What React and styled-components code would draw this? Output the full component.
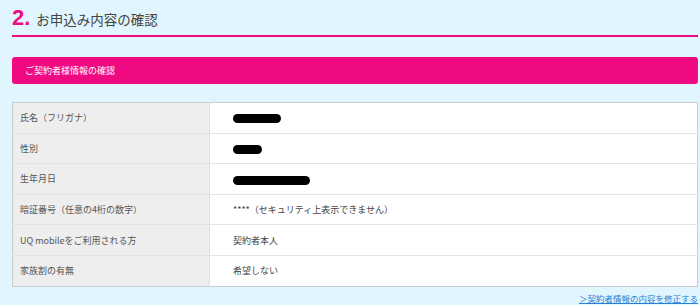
import styled, { createGlobalStyle } from "styled-components"

const GlobalStyle = createGlobalStyle`
  html, body {
    margin: 0;
    padding: 0;
    background: #e0f5fd;
    font-family: "Noto Sans CJK JP", "Liberation Sans", sans-serif;
  }
`

const rows = [
  { label: "氏名（フリガナ）", mask: 48 },
  { label: "性別", mask: 29 },
  { label: "生年月日", mask: 77 },
  { label: "暗証番号（任意の4桁の数字）", value: "****（セキュリティ上表示できません）" },
  { label: "UQ mobileをご利用される方", value: "契約者本人" },
  { label: "家族割の有無", value: "希望しない" },
]

export default function App() {
  return (
    <>
      <GlobalStyle />
      <Page>
        <Heading>
          <StepNo>2.</StepNo>
          <HeadingText>お申込み内容の確認</HeadingText>
        </Heading>

        <SectionBar>ご契約者様情報の確認</SectionBar>

        <Table>
          <colgroup>
            <col style={{ width: 197 }} />
            <col />
          </colgroup>
          <tbody>
            {rows.map((r) => (
              <Row key={r.label}>
                <Label>{r.label}</Label>
                <Value>
                  {r.mask ? <Mask style={{ width: r.mask }} /> : r.value}
                </Value>
              </Row>
            ))}
          </tbody>
        </Table>

        <LinkRow>
          <EditLink href="#">＞契約者情報の内容を修正する</EditLink>
        </LinkRow>
      </Page>
    </>
  )
}

const Page = styled.div`
  width: 700px;
  height: 305px;
  box-sizing: border-box;
  padding: 0 2px 0 12px;
  overflow: hidden;
`

const Heading = styled.div`
  display: flex;
  align-items: baseline;
  height: 37px;
  box-sizing: border-box;
  padding-top: 5px;
  border-bottom: 2px solid #ee0a80;
`

const StepNo = styled.span`
  font-family: "Liberation Sans", Arial, sans-serif;
  font-weight: bold;
  font-size: 22px;
  color: #ee0a80;
  margin-right: 6px;
`

const HeadingText = styled.span`
  font-size: 13.5px;
  color: #444;
`

const SectionBar = styled.div`
  margin-top: 20px;
  height: 27px;
  display: flex;
  align-items: center;
  padding-left: 13px;
  background: #f00a82;
  border-radius: 3px;
  color: #fff;
  font-size: 9px;
`

const Table = styled.table`
  margin-top: 18px;
  width: 100%;
  table-layout: fixed;
  border-collapse: collapse;
  border: 1px solid #c8cccc;
  background: #fff;
`

const Row = styled.tr`
  height: 30.6px;
  & + & td {
    border-top: 1px solid #e4e4e4;
  }
`

const Label = styled.td`
  padding: 0 0 0 7px;
  background: #eeeeee;
  border-right: 1px solid #e0e0e0;
  font-size: 9px;
  color: #555;
`

const Value = styled.td`
  padding: 0 0 0 23px;
  font-size: 9px;
  color: #444;
`

const Mask = styled.span`
  display: inline-block;
  height: 9px;
  border-radius: 5px;
  background: #000;
  vertical-align: middle;
`

const LinkRow = styled.div`
  display: flex;
  justify-content: flex-end;
  margin-top: 5px;
`

const EditLink = styled.a`
  font-size: 8.5px;
  color: #2a7fd4;
  text-decoration: underline;
`
